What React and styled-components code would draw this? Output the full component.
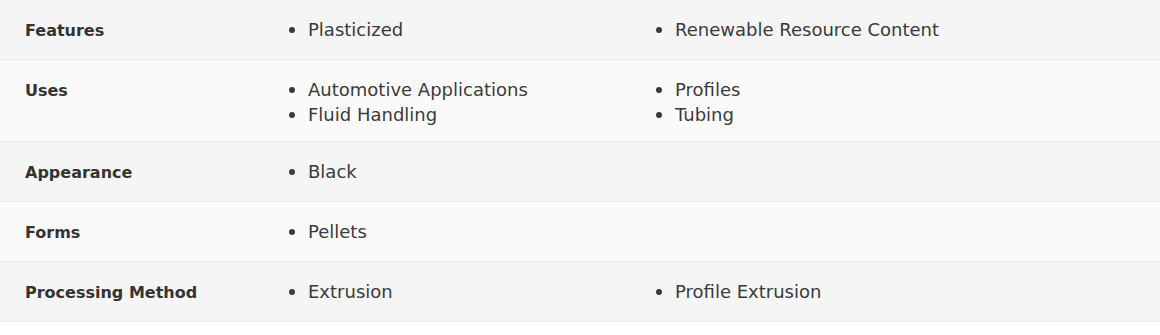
import React from 'react';
import styled, { createGlobalStyle } from 'styled-components';

const GlobalStyle = createGlobalStyle`
  * { box-sizing: border-box; }
  body {
    margin: 0;
    background: #ffffff;
    font-family: "DejaVu Sans", "Noto Sans", sans-serif;
    color: #333333;
  }
`;

const rows = [
  { label: 'Features', left: ['Plasticized'], right: ['Renewable Resource Content'] },
  { label: 'Uses', left: ['Automotive Applications', 'Fluid Handling'], right: ['Profiles', 'Tubing'] },
  { label: 'Appearance', left: ['Black'], right: [] },
  { label: 'Forms', left: ['Pellets'], right: [] },
  { label: 'Processing Method', left: ['Extrusion'], right: ['Profile Extrusion'] },
];

const Table = styled.div`
  width: 1160px;
  display: flex;
  flex-direction: column;
`;

const Row = styled.div`
  display: grid;
  grid-template-columns: 259px 367px 1fr;
  align-items: start;
  padding: 16px 0 14px 25px;
  background: ${(p) => (p.$odd ? '#fafafa' : '#f5f5f5')};
  border-bottom: 1px solid #ebebeb;
`;

const Label = styled.div`
  font-size: 16px;
  font-weight: 700;
  line-height: 29px;
  color: #333333;
`;

const List = styled.ul`
  margin: 0;
  padding: 1px 0 0 0;
  list-style: none;
`;

const Item = styled.li`
  position: relative;
  padding-left: 24px;
  font-size: 18px;
  line-height: 25px;
  color: #3a3a3a;

  &::before {
    content: '';
    position: absolute;
    left: 5px;
    top: 10px;
    width: 6px;
    height: 6px;
    border-radius: 50%;
    background: #3a3a3a;
  }
`;

export default function App() {
  return (
    <>
      <GlobalStyle />
      <Table>
        {rows.map((r, i) => (
          <Row key={r.label} $odd={i % 2 === 1}>
            <Label>{r.label}</Label>
            <List>
              {r.left.map((t) => (
                <Item key={t}>{t}</Item>
              ))}
            </List>
            <List>
              {r.right.map((t) => (
                <Item key={t}>{t}</Item>
              ))}
            </List>
          </Row>
        ))}
      </Table>
    </>
  );
}
